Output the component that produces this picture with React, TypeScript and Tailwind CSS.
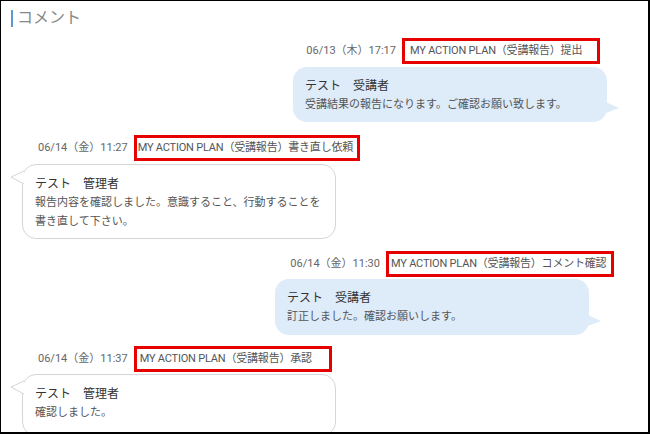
import React from 'react';

const font = { fontFamily: "Roboto, 'Noto Sans CJK JP', sans-serif" };

type Msg = {
  side: 'left' | 'right';
  date: string;
  title: string;
  name: string;
  lines: string[];
  metaClass: string;
  boxClass: string;
  bubbleClass: string;
};

const messages: Msg[] = [
  {
    side: 'right',
    date: '06/13（木）17:17',
    title: 'MY ACTION PLAN（受講報告）提出',
    name: 'テスト　受講者',
    lines: ['受講結果の報告になります。ご確認お願い致します。'],
    metaClass: 'mr-[48px] mt-[10px]',
    boxClass: 'w-[198px] pl-[5px]',
    bubbleClass: 'mr-[41px] mt-[3px] h-[55px]',
  },
  {
    side: 'left',
    date: '06/14（金）11:27',
    title: 'MY ACTION PLAN（受講報告）書き直し依頼',
    name: 'テスト　管理者',
    lines: ['報告内容を確認しました。意識すること、行動することを', '書き直して下さい。'],
    metaClass: 'ml-[37px] mt-[13px]',
    boxClass: 'w-[226px] pl-[1px]',
    bubbleClass: 'ml-[21px] mt-[3px] h-[75px]',
  },
  {
    side: 'right',
    date: '06/14（金）11:30',
    title: 'MY ACTION PLAN（受講報告）コメント確認',
    name: 'テスト　受講者',
    lines: ['訂正しました。確認お願いします。'],
    metaClass: 'mr-[34px] mt-[12px]',
    boxClass: 'w-[228px] pl-[2px]',
    bubbleClass: 'mr-[59px] mt-[2px] h-[56px]',
  },
  {
    side: 'left',
    date: '06/14（金）11:37',
    title: 'MY ACTION PLAN（受講報告）承認',
    name: 'テスト　管理者',
    lines: ['確認しました。'],
    metaClass: 'ml-[37px] mt-[11px]',
    boxClass: 'w-[198px] pl-[3px]',
    bubbleClass: 'ml-[21px] mt-[2px] h-[62px]',
  },
];

function Tail({ side }: { side: 'left' | 'right' }) {
  if (side === 'right') {
    return (
      <svg className="absolute right-[-13px] bottom-[8px]" width="14" height="12" viewBox="0 0 14 12">
        <path d="M0 0 L13 6 L0 11 Z" fill="#deebf8" />
      </svg>
    );
  }
  return (
    <svg className="absolute left-[-13px] top-[2px]" width="15" height="18" viewBox="0 0 15 18">
      <path d="M14 4 L1 10 L14 17" fill="#ffffff" stroke="#d6d6d6" strokeWidth="1" />
    </svg>
  );
}

function Message({ m }: { m: Msg }) {
  const right = m.side === 'right';
  return (
    <div className={`flex flex-col ${right ? 'items-end' : 'items-start'}`}>
      <div className={`flex items-center text-[11px] text-[#666] whitespace-nowrap ${m.metaClass}`}>
        <span className="mr-[6px]">{m.date}</span>
        <span
          className={`border-[3px] border-[#e60000] h-[26px] flex items-center text-[#555] tracking-[-0.2px] ${m.boxClass}`}
        >
          {m.title}
        </span>
      </div>
      <div
        className={`relative w-[314px] rounded-[14px] px-[12px] pt-[9px] ${m.bubbleClass} ${
          right ? 'bg-[#deebf8]' : 'bg-white border border-[#d6d6d6]'
        }`}
      >
        <div className="text-[12px] text-[#333] leading-[20px]">{m.name}</div>
        <div className="text-[11px] text-[#555] leading-[19px] mt-[-1px]">
          {m.lines.map((l, i) => (
            <div key={i}>{l}</div>
          ))}
        </div>
        <Tail side={m.side} />
      </div>
    </div>
  );
}

export default function App() {
  return (
    <div
      className="w-[650px] h-[434px] overflow-hidden bg-white border-l border-t border-r-2 border-b-2 border-black"
      style={font}
    >
      <div className="flex items-center pl-[10px] pt-[7px]">
        <div className="w-[2px] h-[17px] bg-[#5b9bd5]" />
        <span className="ml-[4px] text-[16px] text-[#888] leading-[20px]">コメント</span>
      </div>
      {messages.map((m, i) => (
        <Message key={i} m={m} />
      ))}
    </div>
  );
}
